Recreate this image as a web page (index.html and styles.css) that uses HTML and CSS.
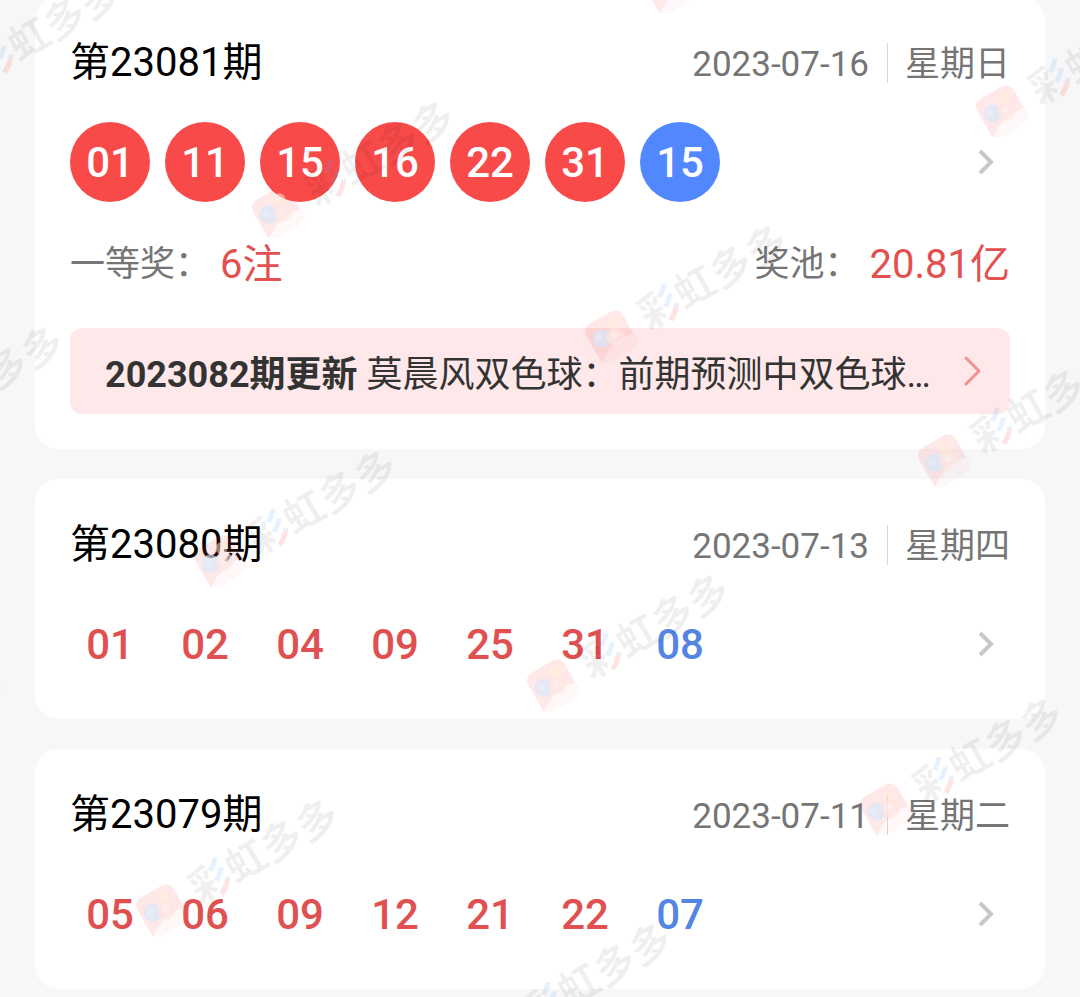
FILE: index.html
```
<!DOCTYPE html>
<html lang="zh-CN">
<head>
    <meta charset="UTF-8">
    <meta name="viewport" content="width=device-width, initial-scale=1.0">
    <title>双色球开奖</title>
    <link rel="stylesheet" href="styles.css">
</head>
<body>
    <main class="draw-list">
        <!-- Latest draw -->
        <section class="card">
            <header class="card-head">
                <h2>第23081期</h2>
                <p class="date"><time datetime="2023-07-16">2023-07-16</time><span class="weekday">星期日</span></p>
            </header>
            <a class="numbers" href="#23081">
                <ul class="balls filled">
                    <li>01</li>
                    <li>11</li>
                    <li>15</li>
                    <li>16</li>
                    <li>22</li>
                    <li>31</li>
                    <li class="blue">15</li>
                </ul>
                <svg class="arrow" viewBox="0 0 16 26"><path d="M2 2l11 11L2 24"/></svg>
            </a>
            <div class="prizes">
                <p>一等奖：<strong>6注</strong></p>
                <p>奖池：<strong>20.81亿</strong></p>
            </div>
            <a class="news" href="#news">
                <span class="news-text"><b>2023082期更新</b> 莫晨风双色球：前期预测中双色球…</span>
                <svg class="news-arrow" viewBox="0 0 18 30"><path d="M2 2l13 13L2 28"/></svg>
            </a>
        </section>

        <!-- Earlier draws -->
        <section class="card">
            <header class="card-head">
                <h2>第23080期</h2>
                <p class="date"><time datetime="2023-07-13">2023-07-13</time><span class="weekday">星期四</span></p>
            </header>
            <a class="numbers" href="#23080">
                <ul class="balls">
                    <li>01</li>
                    <li>02</li>
                    <li>04</li>
                    <li>09</li>
                    <li>25</li>
                    <li>31</li>
                    <li class="blue">08</li>
                </ul>
                <svg class="arrow" viewBox="0 0 16 26"><path d="M2 2l11 11L2 24"/></svg>
            </a>
        </section>

        <section class="card">
            <header class="card-head">
                <h2>第23079期</h2>
                <p class="date"><time datetime="2023-07-11">2023-07-11</time><span class="weekday">星期二</span></p>
            </header>
            <a class="numbers" href="#23079">
                <ul class="balls">
                    <li>05</li>
                    <li>06</li>
                    <li>09</li>
                    <li>12</li>
                    <li>21</li>
                    <li>22</li>
                    <li class="blue">07</li>
                </ul>
                <svg class="arrow" viewBox="0 0 16 26"><path d="M2 2l11 11L2 24"/></svg>
            </a>
        </section>
    </main>

    <!-- Watermark layer, filled by script.js -->
    <div class="watermarks" id="watermarks" aria-hidden="true"></div>

    <template id="markTemplate">
        <div class="mark">
            <svg class="mark-logo" viewBox="0 0 44 48">
                <path d="M11 4h21q11 0 11 10v20q-8-2-16-1-14 2-26 11V14Q1 4 11 4z" fill="#f55050" fill-opacity=".13"/>
                <path d="M1 44q12-9 26-11 8-1 16 1 3 4 0 8 0 5-7 4-5 4-13 2-12 3-22-4z" fill="#ff7070" fill-opacity=".05"/>
                <circle cx="30" cy="15" r="6" fill="#ffeed8" fill-opacity=".5"/>
                <circle cx="13" cy="23" r="9" fill="#d5e6fb" fill-opacity=".65"/>
                <circle cx="11" cy="21" r="4" fill="#f0f7ff" fill-opacity=".3"/>
                <circle cx="26" cy="28" r="9" fill="#fde6e2" fill-opacity=".65"/>
                <circle cx="26" cy="26" r="4" fill="#fff8f4" fill-opacity=".4"/>
            </svg>
            <span class="mark-text"><span class="mark-color">彩</span>虹多多</span>
        </div>
    </template>
    <script src="script.js"></script>
</body>
</html>
```
FILE: styles.css
```
* {
    margin: 0;
    padding: 0;
    box-sizing: border-box;
}

body {
    position: relative;
    min-height: 100vh;
    overflow-x: hidden;
    background-color: #f7f7f7;
    color: #000;
    font-family: Roboto, "Noto Sans CJK SC", sans-serif;
}

a {
    color: inherit;
    text-decoration: none;
}

svg {
    flex: none;
    fill: none;
}

.draw-list {
    display: flex;
    flex-direction: column;
    gap: 30px;
    margin-top: -3px;
    padding: 0 35px 7px;
}

.card {
    padding: 40px 35px 35px;
    background-color: #fff;
    border-radius: 24px;
}

/* Issue number and date */
.card-head {
    display: flex;
    justify-content: space-between;
    align-items: center;
    height: 50px;
    margin-bottom: 35px;
    padding-top: 2px;
}

.card-head h2 {
    font-size: 40px;
    font-weight: 400;
    line-height: 52px;
}

.date {
    display: flex;
    height: 40px;
    color: #757575;
    font-size: 35px;
    line-height: 44px;
}

.weekday {
    margin-left: 18px;
    padding-left: 17px;
    border-left: 1px solid #d8d8d8;
}

/* Drawn numbers */
.numbers {
    display: flex;
    justify-content: space-between;
    align-items: center;
    padding-right: 16px;
}

.balls {
    display: flex;
    gap: 15px;
    list-style: none;
}

.balls li {
    width: 80px;
    height: 80px;
    border-radius: 50%;
    color: #e05050;
    font-size: 42px;
    font-weight: 500;
    line-height: 82px;
    text-align: center;
}

.balls .blue {
    color: #5484e4;
}

.filled li {
    background-color: #f94a4a;
    color: #fff;
}

.filled .blue {
    background-color: #5288ff;
    color: #fff;
}

.arrow {
    width: 16px;
    height: 26px;
    stroke: #c8c8c8;
    stroke-width: 4;
}

/* Prize line */
.prizes {
    display: flex;
    justify-content: space-between;
    margin: 38px 0;
    color: #757575;
    font-size: 35px;
    line-height: 50px;
}

.prizes p {
    display: flex;
}

.prizes strong {
    margin-left: 10px;
    color: #e25050;
    font-size: 40px;
    font-weight: 400;
}

/* News banner */
.news {
    display: flex;
    justify-content: space-between;
    align-items: center;
    height: 86px;
    padding: 0 28px 0 35px;
    background-color: #fee8e9;
    border-radius: 12px;
    color: #333;
    font-size: 36px;
}

.news-text {
    overflow: hidden;
    text-overflow: ellipsis;
    white-space: nowrap;
}

.news-arrow {
    width: 18px;
    height: 30px;
    stroke: #f09090;
    stroke-width: 3;
    stroke-linecap: round;
    stroke-linejoin: round;
}

/* Watermark */
.watermarks {
    position: absolute;
    inset: 0;
    overflow: hidden;
    pointer-events: none;
}

.mark {
    position: absolute;
    display: flex;
    align-items: center;
    gap: 14px;
    height: 48px;
    margin: -24px 0 0 -22px;
    transform: rotate(-30deg);
    transform-origin: 22px 24px;
    white-space: nowrap;
}

.mark-logo {
    width: 44px;
    height: 48px;
}

.mark-text {
    padding-top: 4px;
    color: rgba(0, 0, 0, 0.06);
    font-size: 41px;
    font-weight: 700;
    line-height: 52px;
}

/* Grey left part, blue and red strokes on the right */
.mark-color {
    background-image:
        linear-gradient(rgba(0, 0, 0, 0.06), rgba(0, 0, 0, 0.06)),
        linear-gradient(180deg, rgba(80, 160, 255, 0.14) 62%, rgba(255, 60, 60, 0.14) 62%);
    background-position: left, right;
    background-repeat: no-repeat;
    background-size: 58% 100%, 42% 100%;
    background-clip: text;
    -webkit-background-clip: text;
    color: transparent;
}
```
FILE: script.js
```
// Repeat the watermark on a slanted grid over the whole page
const layer = document.getElementById('watermarks');
const template = document.getElementById('markTemplate');

function drawWatermarks() {
    const width = layer.clientWidth;
    const height = layer.clientHeight;
    layer.innerHTML = '';

    for (let row = -2; row * 349 < height + 700; row++) {
        for (let col = -3; col * 333 < width + 700; col++) {
            const x = 277 + col * 333 - row * 58;
            const y = 211 + col * 124 + row * 349;

            if (x < -200 || x > width + 30 || y < -30 || y > height + 120) {
                continue;
            }

            const mark = template.content.firstElementChild.cloneNode(true);
            mark.style.left = x + 'px';
            mark.style.top = y + 'px';
            layer.appendChild(mark);
        }
    }
}

drawWatermarks();
window.addEventListener('resize', drawWatermarks);
```
